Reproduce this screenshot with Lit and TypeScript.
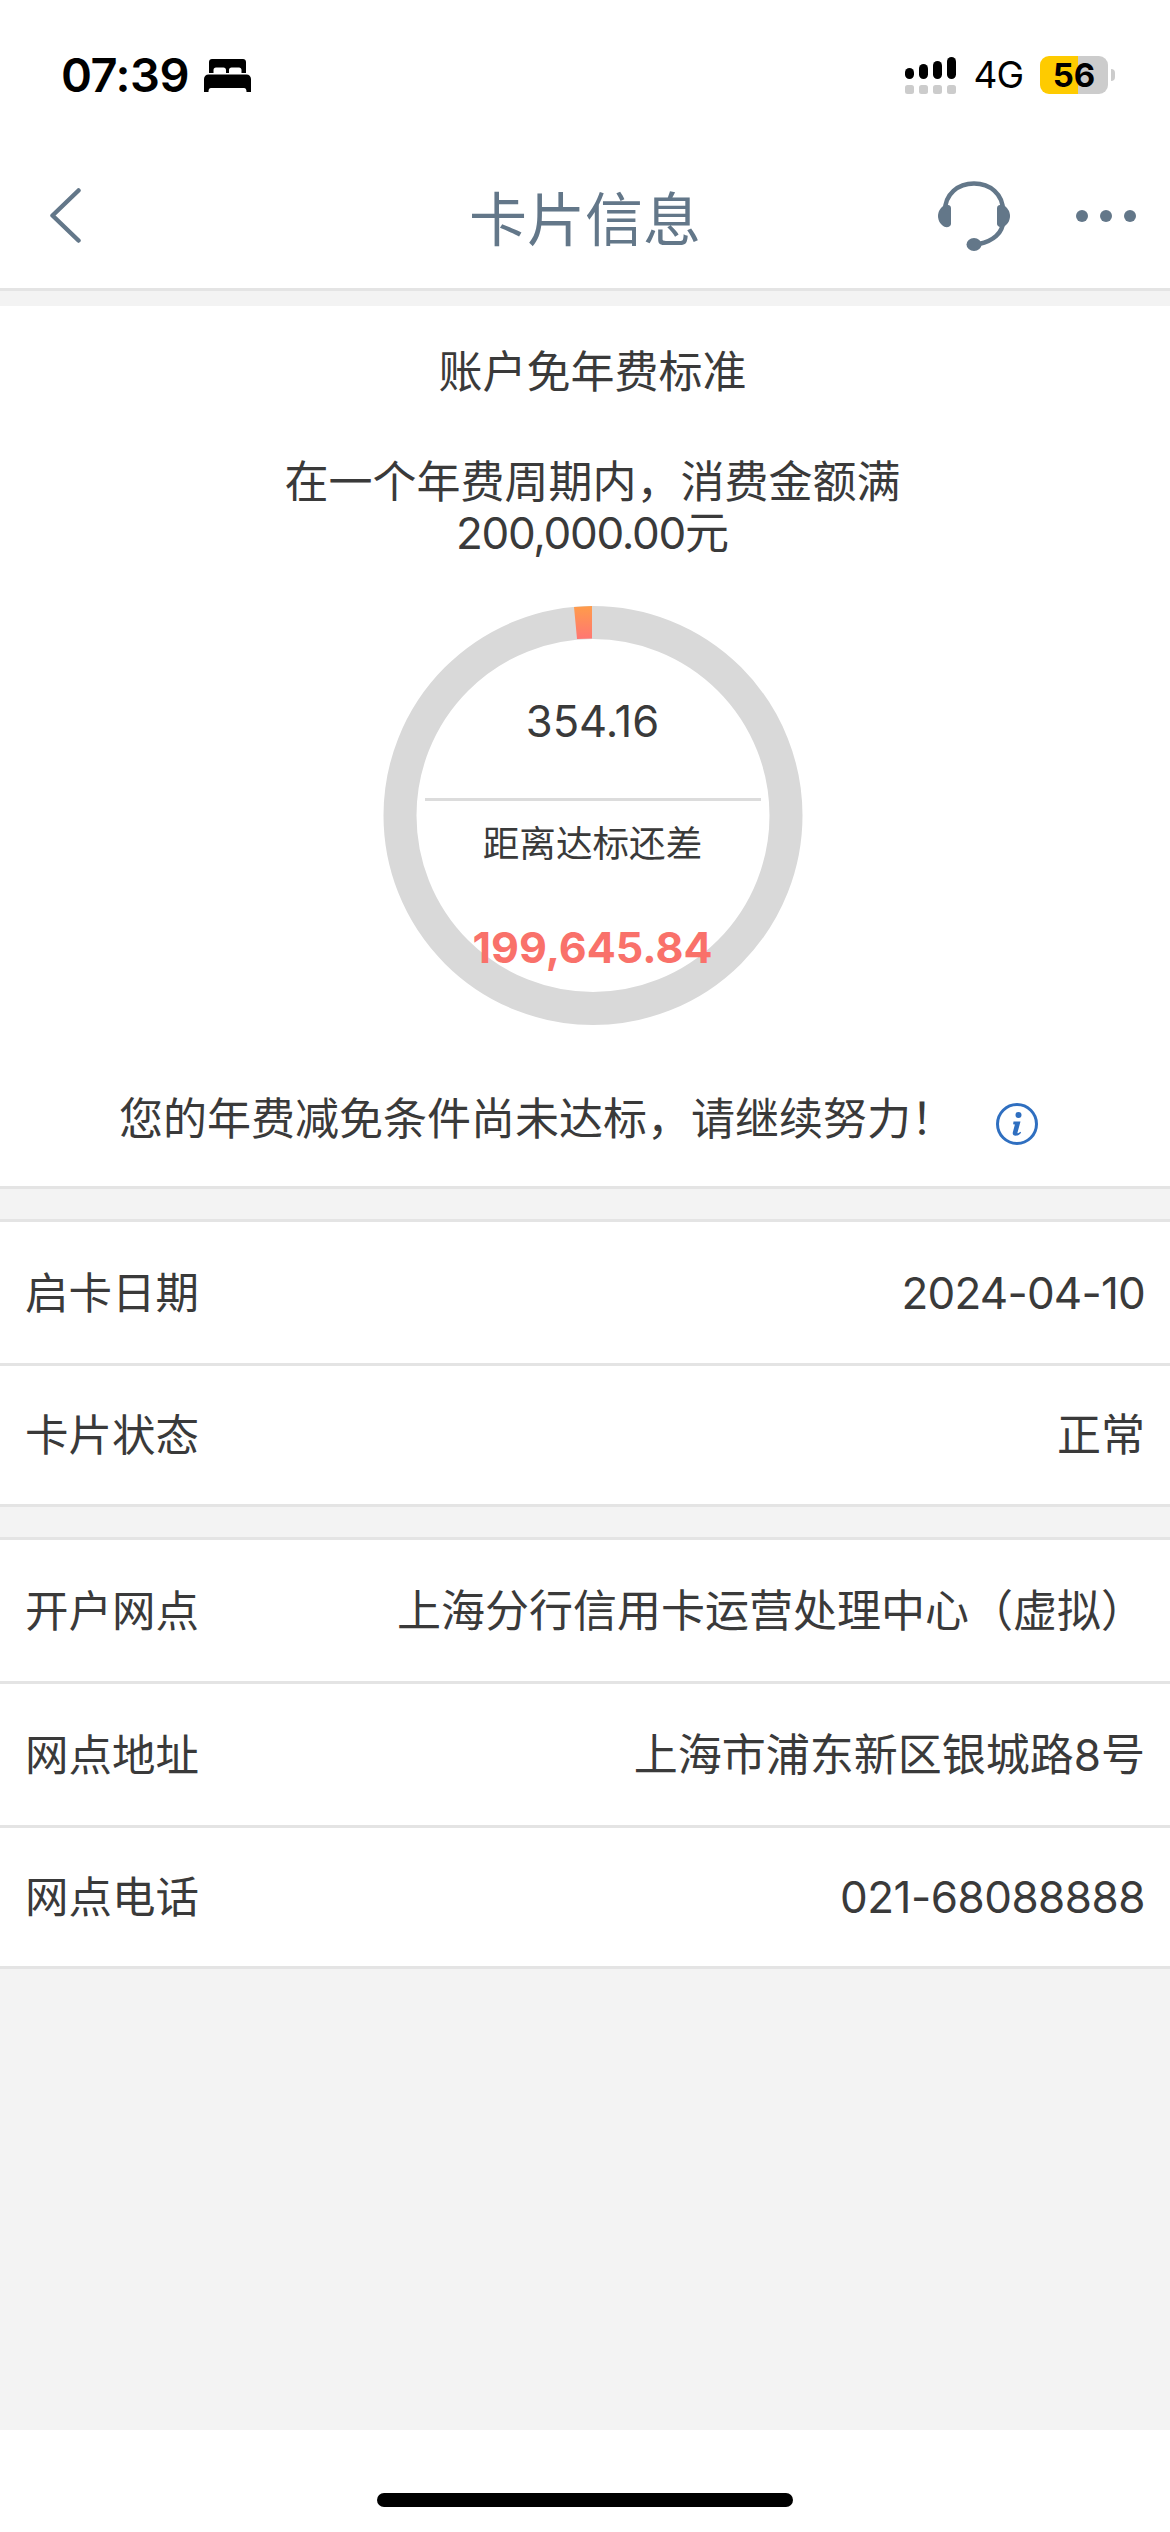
import { css, html, LitElement, svg } from 'lit'
import { customElement } from 'lit/decorators.js'

interface InfoRow {
  label: string
  value: string
  valueClass?: string
}

const cardRows: InfoRow[] = [
  { label: '启卡日期', value: '2024-04-10', valueClass: 'date' },
  { label: '卡片状态', value: '正常' },
]

const branchRows: InfoRow[] = [
  { label: '开户网点', value: '上海分行信用卡运营处理中心（虚拟）' },
  { label: '网点地址', value: '上海市浦东新区银城路8号' },
  { label: '网点电话', value: '021-68088888', valueClass: 'phone' },
]

const signalBars = [
  { x: 0, y: 11, h: 11 },
  { x: 14, y: 7, h: 15 },
  { x: 28, y: 4, h: 18 },
  { x: 42, y: 0, h: 22 },
]

@customElement('app-root')
export class AppRoot extends LitElement {
  static styles = css`
    :host {
      display: block;
      width: 1170px;
      height: 2532px;
      overflow: hidden;
      background: #fff;
      color: #3a3a3a;
      font-family: Inter, 'Noto Sans CJK SC', sans-serif;
    }

    .page {
      display: flex;
      flex-direction: column;
      height: 100%;
    }

    .status {
      display: flex;
      align-items: center;
      justify-content: space-between;
      height: 146px;
      padding: 4px 55px 0 61px;
      box-sizing: border-box;
      color: #000;
    }

    .status-left,
    .status-right {
      display: flex;
      align-items: center;
    }

    .time {
      font-size: 47px;
      font-weight: 600;
      line-height: 50px;
      letter-spacing: -0.5px;
    }

    .bed {
      margin-left: 15px;
    }

    .signal {
      display: block;
    }

    .network {
      margin-left: 17px;
      font-size: 37px;
      line-height: 46px;
      letter-spacing: -1px;
    }

    .battery {
      display: flex;
      align-items: center;
      margin-left: 17px;
    }

    .battery-body {
      display: flex;
      align-items: center;
      justify-content: center;
      width: 68px;
      height: 38px;
      border-radius: 9px;
      background: linear-gradient(to right, #fecb00 56%, #cccccc 56%);
      font-size: 33px;
      font-weight: 700;
      line-height: 38px;
    }

    .battery-cap {
      width: 4px;
      height: 12px;
      margin-left: 3px;
      border-radius: 0 4px 4px 0;
      background: #ccc;
    }

    .nav {
      display: grid;
      grid-template-columns: 1fr auto 1fr;
      align-items: center;
      height: 142px;
      box-sizing: border-box;
      padding-bottom: 3px;
      color: #637789;
    }

    .nav-title {
      font-size: 58px;
      line-height: 70px;
      margin-top: 9px;
    }

    .nav-left {
      display: flex;
      padding-left: 50px;
    }

    .nav-right {
      display: flex;
      align-items: center;
      justify-content: flex-end;
      gap: 66px;
      padding-right: 34px;
    }

    .rule {
      height: 3px;
      background: #e4e4e4;
    }

    .gap {
      background: #f3f3f3;
    }

    .gap-top {
      height: 15px;
    }

    .gap-mid {
      height: 30px;
    }

    .summary {
      display: flex;
      flex-direction: column;
      align-items: center;
      height: 880px;
      box-sizing: border-box;
      padding: 41px 0 0 15px;
      font-size: 44px;
      line-height: 51px;
    }

    .summary-head {
      margin-bottom: 59px;
    }

    .summary-note {
      text-align: center;
    }

    .summary-amount {
      letter-spacing: -1.3px;
    }

    .ring {
      display: grid;
      width: 420px;
      height: 420px;
      margin-top: 47px;
    }

    .ring > * {
      grid-area: 1 / 1;
    }

    .ring-inner {
      display: flex;
      flex-direction: column;
      align-items: center;
      position: relative;
    }

    .spent {
      margin-top: 90px;
      height: 102px;
      font-size: 43.5px;
      line-height: 50px;
    }

    .divider {
      width: 336px;
      height: 3px;
      background: #dcdcdc;
    }

    .gap-label {
      margin-top: 18px;
      font-size: 36.6px;
      line-height: 50px;
    }

    .remain {
      margin-top: 53px;
      color: #f9716a;
      font-size: 43px;
      font-weight: 700;
      line-height: 50px;
    }

    .summary-foot {
      display: flex;
      align-self: flex-start;
      margin-top: 68px;
      padding-left: 104px;
    }

    .info {
      align-self: flex-end;
      margin-left: 41px;
    }

    .row {
      display: flex;
      align-items: center;
      justify-content: space-between;
      height: 141px;
      box-sizing: border-box;
      padding: 0 25px;
      border-bottom: 3px solid #e4e4e4;
      background: #fff;
      font-size: 44px;
      line-height: 50px;
    }

    .row-group .row:not(:last-child) {
      height: 144px;
    }

    .label {
      font-size: 43.5px;
    }

    .date {
      letter-spacing: -0.8px;
    }

    .phone {
      letter-spacing: -0.5px;
    }

    .fill {
      flex: 1;
      background: #f3f3f3;
    }

    .home {
      display: flex;
      justify-content: center;
      height: 102px;
      padding-top: 63px;
      box-sizing: border-box;
    }

    .home-bar {
      width: 416px;
      height: 14px;
      border-radius: 7px;
      background: #000;
    }
  `

  private renderBed() {
    return html`<svg
      class="bed"
      width="47"
      height="33"
      viewBox="0 0 47 33"
      preserveAspectRatio="none"
      fill="#000"
    >
      <path
        d="M5 3c0-1.700 1.300-3 3-3h31c1.700 0 3 1.300 3 3v11h-4.500v-3c0-1.500-1-2.500-2.500-2.500h-7.500c-1.500 0-2.500 1-2.500 2.500v3h-3v-3c0-1.500-1-2.500-2.500-2.500H12c-1.500 0-2.500 1-2.500 2.500v3H5z"
      />
      <path
        d="M4.500 15.500h38c2.500 0 4.500 2 4.500 4.500v13h-4.500v-.5c0-2-.8-3.500-2.500-3.500H7c-1.700 0-2.500 1.500-2.500 3.500v.5H0V20c0-2.500 2-4.500 4.500-4.500z"
      />
    </svg>`
  }

  private renderSignal() {
    return html`<svg class="signal" width="51" height="37" viewBox="0 0 51 37">
      ${signalBars.map(
        (bar) => svg`
          <rect x=${bar.x} y=${bar.y} width="9" height=${bar.h} rx="4.500" fill="#000" />
          <rect x=${bar.x} y="28" width="9" height="9" rx="2.500" fill="#ccc" />
        `,
      )}
    </svg>`
  }

  private renderHeadset() {
    return html`<svg width="72" height="70" viewBox="0 0 72 70" fill="#637789">
      <path
        d="M7 30C7 13 20 2.500 36 2.500S65 13 65 30v10c0 12-10 20-24 23"
        fill="none"
        stroke="#637789"
        stroke-width="4.500"
      />
      <path d="M7 24C3 26 0 30 0 35s3 9 7 11c3 .6 6-.6 6-3V27c0-2.600-3-3.600-6-3z" />
      <path d="M65 24c4 2 7 6 7 11s-3 9-7 11c-3 .6-6-.6-6-3V27c0-2.600 3-3.600 6-3z" />
      <ellipse cx="36" cy="63.500" rx="7.500" ry="6.500" />
    </svg>`
  }

  private renderRing() {
    return html`<svg width="420" height="420" viewBox="0 0 420 420">
      <defs>
        <linearGradient id="progress" x1="0" y1="0" x2="0" y2="1">
          <stop offset="0" stop-color="#ff9c4a" />
          <stop offset="1" stop-color="#ff7673" />
        </linearGradient>
      </defs>
      <circle cx="210" cy="209.500" r="193" fill="none" stroke="#d9d9d9" stroke-width="33" />
      <path d="M209 0 L191 1 L194 33 L209 32.500 Z" fill="url(#progress)" />
    </svg>`
  }

  private renderInfo() {
    return html`<svg class="info" width="42" height="42" viewBox="0 0 42 42">
      <circle cx="21" cy="21" r="19.500" fill="none" stroke="#2f6fc0" stroke-width="3" />
      <circle cx="22.500" cy="12" r="3" fill="#2f6fc0" />
      <path
        d="M17.500 18.500h7l-3 11c-.2.800.4 1 1 .6l2-1.400.6 1c-1.600 1.900-3.300 3-5.400 3-2.600 0-3.400-1.500-2.800-3.700l2-7.500-1.800-.2z"
        fill="#2f6fc0"
      />
    </svg>`
  }

  private renderRows(rows: InfoRow[]) {
    return html`<div class="row-group">
      ${rows.map(
        (row) => html`<div class="row">
          <span class="label">${row.label}</span>
          <span class=${row.valueClass ?? ''}>${row.value}</span>
        </div>`,
      )}
    </div>`
  }

  render() {
    return html`
      <div class="page">
        <div class="status">
          <div class="status-left">
            <span class="time">07:39</span>
            ${this.renderBed()}
          </div>
          <div class="status-right">
            ${this.renderSignal()}
            <span class="network">4G</span>
            <div class="battery">
              <div class="battery-body">56</div>
              <div class="battery-cap"></div>
            </div>
          </div>
        </div>

        <div class="nav">
          <div class="nav-left">
            <svg width="31" height="55" viewBox="0 0 31 55" fill="none">
              <path
                d="M28.500 2.500 L2.500 27.500 L28.500 52.500"
                stroke="#637789"
                stroke-width="4.500"
                stroke-linecap="round"
                stroke-linejoin="round"
              />
            </svg>
          </div>
          <div class="nav-title">卡片信息</div>
          <div class="nav-right">
            ${this.renderHeadset()}
            <svg width="60" height="12" viewBox="0 0 60 12" fill="#637789">
              <circle cx="6" cy="6" r="6" />
              <circle cx="30" cy="6" r="6" />
              <circle cx="54" cy="6" r="6" />
            </svg>
          </div>
        </div>
        <div class="rule"></div>
        <div class="gap gap-top"></div>

        <div class="summary">
          <div class="summary-head">账户免年费标准</div>
          <div class="summary-note">
            在一个年费周期内，消费金额满<br /><span class="summary-amount">200,000.00</span>元
          </div>
          <div class="ring">
            ${this.renderRing()}
            <div class="ring-inner">
              <div class="spent">354.16</div>
              <div class="divider"></div>
              <div class="gap-label">距离达标还差</div>
              <div class="remain">199,645.84</div>
            </div>
          </div>
          <div class="summary-foot">
            <span>您的年费减免条件尚未达标，请继续努力！</span>
            ${this.renderInfo()}
          </div>
        </div>
        <div class="rule"></div>
        <div class="gap gap-mid"></div>
        <div class="rule"></div>
        ${this.renderRows(cardRows)}
        <div class="gap gap-mid"></div>
        <div class="rule"></div>
        ${this.renderRows(branchRows)}
        <div class="fill"></div>
        <div class="home"><div class="home-bar"></div></div>
      </div>
    `
  }
}
